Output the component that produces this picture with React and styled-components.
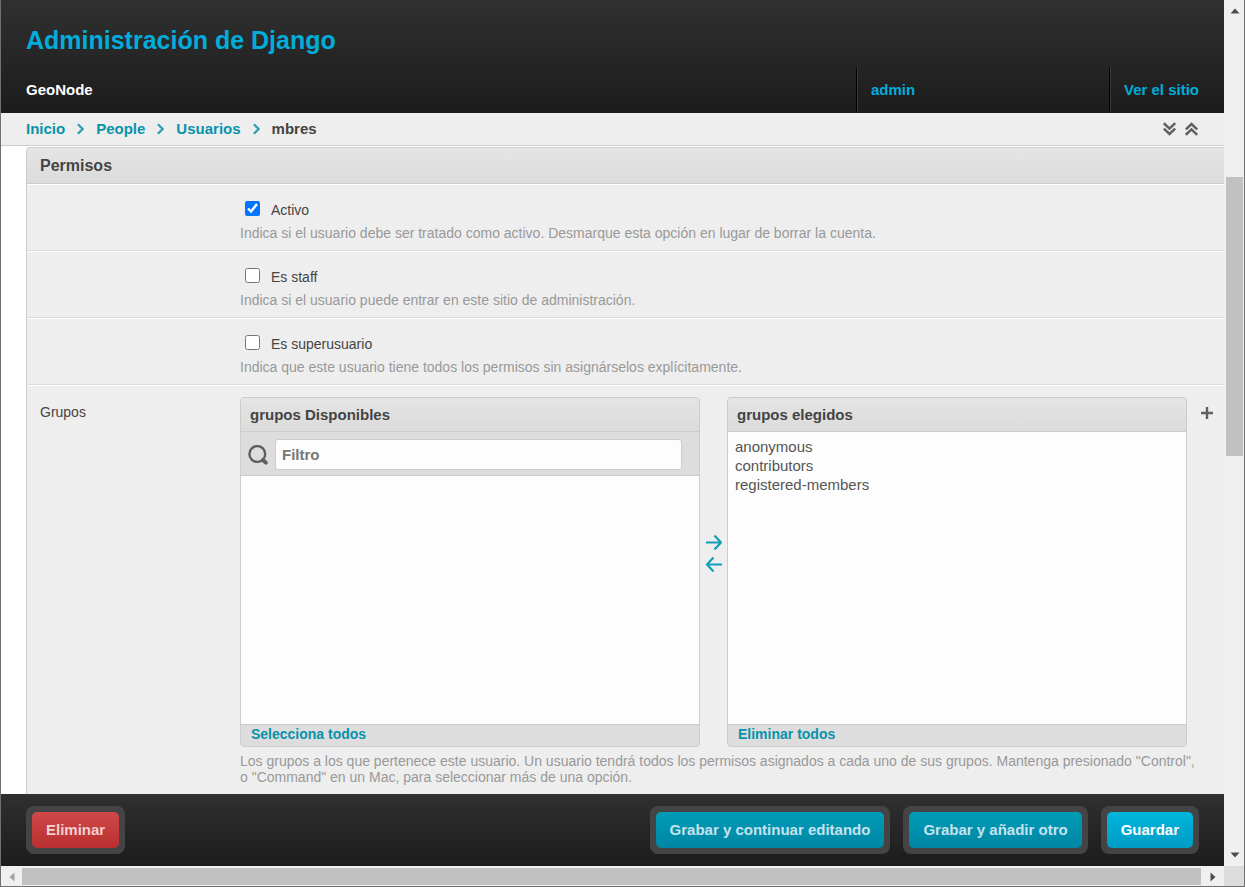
import React from "react";
import styled, { createGlobalStyle, css } from "styled-components";

const GlobalStyle = createGlobalStyle`
  *, *::before, *::after { box-sizing: border-box; }
  body { margin: 0; background: #fff; }
  body, button, input, select {
    font-family: Arial, "Liberation Sans", sans-serif;
    font-size: 14px;
    line-height: 16px;
    color: #444;
  }
`;

const colors = {
  link: "#0893ab",
  headerLink: "#00addb",
  line: "#ccc",
  panel: "#eee",
};

const darkBar = css`
  background: linear-gradient(#303030, #1c1c1c);
`;

const Frame = styled.div`
  display: grid;
  grid-template: minmax(0, 1fr) 20px / minmax(0, 1fr) 20px;
  height: 100vh;
  border: 1px solid #707070;
  border-top: 0;
  overflow: hidden;
`;

const Viewport = styled.div`
  display: flex;
  flex-direction: column;
  min-height: 0;
`;

const Header = styled.header`
  ${darkBar}
  flex: none;
  font-size: 15px;
  font-weight: bold;
`;

const SiteTitle = styled.h1`
  margin: 0;
  padding: 24px 25px 12px;
  font-size: 25px;
  line-height: 32px;
  color: ${colors.headerLink};
`;

const HeaderNav = styled.nav`
  display: flex;
  line-height: 43px;
`;

const Brand = styled.span`
  flex: 1;
  padding: 0 0 2px 25px;
  color: #fff;
`;

const HeaderCell = styled.span`
  min-width: ${(p) => (p.$wide ? "253px" : "0")};
  padding: 0 25px 2px 14px;
  border-left: 1px solid #000;
  box-shadow: inset 1px 0 #383838;
`;

const HeaderLink = styled.a`
  color: ${colors.headerLink};
  text-decoration: none;
`;

const BreadcrumbBar = styled.div`
  flex: none;
  display: flex;
  align-items: center;
  justify-content: space-between;
  height: 33px;
  padding: 0 25px;
  background: ${colors.panel};
  border-bottom: 1px solid ${colors.line};
  font-size: 15px;
  font-weight: bold;
`;

const Crumbs = styled.nav`
  display: flex;
  align-items: center;
  gap: 12px;
`;

const TextLink = styled.a`
  color: ${colors.link};
  font-weight: bold;
  text-decoration: none;
`;

const Tools = styled.div`
  display: flex;
  gap: 8px;
`;

const IconButton = styled.button`
  display: flex;
  padding: 0;
  border: 0;
  background: none;
  color: ${(p) => p.$color || "#606060"};
  cursor: pointer;
`;

const Content = styled.main`
  flex: 1;
  min-height: 0;
  overflow: hidden;
  padding: 1px 0 0 25px;
`;

const Module = styled.section`
  min-height: 100%;
  background: ${colors.panel};
  border: 1px solid ${colors.line};
  border-width: 1px 0 0 1px;
  border-radius: 4px 0 0 0;
`;

const ModuleTitle = styled.h2`
  margin: 0;
  padding: 1px 13px 0;
  font-size: 16px;
  line-height: 34px;
  background: linear-gradient(#e5e5e5, #dbdbdb);
  border-bottom: 1px solid ${colors.line};
  border-radius: 3px 0 0 0;
`;

const Row = styled.div`
  display: grid;
  grid-template-columns: 200px minmax(0, 1fr);
  padding: 0 0 0 13px;
  border-top: 1px solid #fff;
`;

const CheckRow = styled(Row)`
  min-height: 67px;
  padding-top: 15px;
  border-bottom: 1px solid #dadada;
`;

const GroupRow = styled(Row)`
  padding-top: 11px;
`;

const RowLabel = styled.label`
  padding-top: 7px;
`;

const CheckLabel = styled.label`
  display: flex;
  gap: 11px;
  padding-left: 5px;
  line-height: 20px;
`;

const Checkbox = styled.input`
  width: 15px;
  height: 15px;
  margin: 1px 0 0;
`;

const Help = styled.p`
  margin: 0;
  padding-top: 5px;
  color: #999;
`;

const GroupHelp = styled(Help)`
  padding-top: 6px;
  padding-right: 24px;
`;

const Selector = styled.div`
  display: grid;
  grid-template-columns: minmax(0, 1fr) 27px minmax(0, 1fr) 37px;
`;

const Picker = styled.div`
  display: flex;
  flex-direction: column;
  height: 350px;
  background: #ddd;
  border: 1px solid ${colors.line};
  border-radius: 4px;
  overflow: hidden;
`;

const PickerTitle = styled.h3`
  flex: none;
  margin: 0;
  padding: 0 9px;
  font-size: 15px;
  line-height: 33px;
  background: linear-gradient(#e5e5e5, #dbdbdb);
  border-bottom: 1px solid ${colors.line};
`;

const FilterBar = styled.div`
  display: flex;
  align-items: center;
  gap: 7px;
  height: 44px;
  padding: 2px 17px 0 7px;
  border-bottom: 1px solid ${colors.line};
`;

const FilterInput = styled.input`
  flex: 1;
  min-width: 0;
  height: 31px;
  padding: 0 6px;
  font-size: 15px;
  font-weight: bold;
  background: #fdfdfd;
  border: 1px solid ${colors.line};
  border-radius: 3px;
  &::placeholder { color: #777; }
`;

const List = styled.select`
  flex: 1;
  width: 100%;
  min-height: 0;
  padding: 5px;
  font-size: 15px;
  color: #555;
  background: #fdfdfd;
  border: 0;
  outline: 0;
  border-radius: 0;
  option { min-height: 0; padding: 1px 2px; line-height: 18px; }
`;

const PickerFooter = styled.div`
  flex: none;
  padding: 1px 10px 3px;
  line-height: 17px;
  border-top: 1px solid ${colors.line};
`;

const Arrows = styled.div`
  display: flex;
  flex-direction: column;
  align-items: center;
  gap: 6px;
  padding-top: 137px;
`;

const AddCell = styled.div`
  display: flex;
  align-items: flex-start;
  padding: 10px 0 0 14px;
`;

const SubmitBar = styled.footer`
  ${darkBar}
  flex: none;
  display: flex;
  gap: 13px;
  padding: 12px 25px;
`;

const SubmitBox = styled.div`
  padding: 6px;
  margin-right: ${(p) => (p.$push ? "auto" : "0")};
  background: #444;
  border-radius: 8px;
`;

const tones = {
  red: ["#d04848", "#b92f2f", "#f3d0d0"],
  teal: ["#009cb8", "#0086a3", "#c5e3ee"],
  bright: ["#00b5dc", "#009cc4", "#fff"],
};

const SubmitButton = styled.button`
  display: block;
  height: 36px;
  padding: 0 14px;
  border: 0;
  border-radius: 5px;
  font-size: 15px;
  font-weight: bold;
  color: ${(p) => tones[p.$tone][2]};
  background: linear-gradient(${(p) => tones[p.$tone][0]}, ${(p) => tones[p.$tone][1]});
  cursor: pointer;
`;

const Scrollbar = styled.div`
  display: flex;
  flex-direction: ${(p) => (p.$vertical ? "column" : "row")};
  background: #f0f0f0;
  padding: ${(p) => (p.$vertical ? "0 1px 0 2px" : "2px 0 1px")};
`;

const ScrollEnd = styled.span`
  flex: 0 0 21px;
  display: flex;
  align-items: center;
  justify-content: center;
  color: ${(p) => (p.$off ? "#a3a3a3" : "#4d4d4d")};
  &:last-child { flex-basis: 23px; }
`;

const Track = styled.div`
  flex: 1;
  display: grid;
  grid-template-rows: ${(p) => (p.$vertical ? "156fr 279fr 387fr" : "1fr")};
`;

const Thumb = styled.div`
  grid-row: ${(p) => (p.$vertical ? 2 : 1)};
  background: #c1c1c1;
`;

const Corner = styled.div`
  background: #dcdcdc;
`;

const Triangle = ({ turn = 0 }) => (
  <svg width="10" height="10" viewBox="0 0 10 10" aria-hidden="true">
    <path d="M0.5 7.5 5 2.5 9.5 7.5Z" fill="currentColor" transform={`rotate(${turn} 5 5)`} />
  </svg>
);

const Chevron = () => (
  <svg width="7" height="12" viewBox="0 0 7 12" fill="none" stroke="#2f9fae" strokeWidth="2.3" aria-hidden="true">
    <path d="M0.9 1.3 5.6 6 0.9 10.7" />
  </svg>
);

const DoubleChevron = ({ up }) => (
  <svg width="14" height="14" viewBox="0 0 14 14" fill="none" stroke="currentColor" strokeWidth="2.5" aria-hidden="true">
    <path
      d="M0.8 1.2 6.5 6.6 12.2 1.2M0.8 6.6 6.5 12 12.2 6.6"
      transform={up ? "rotate(180 6.5 7)" : undefined}
    />
  </svg>
);

const Arrow = ({ left }) => (
  <svg width="16" height="16" viewBox="0 0 16 16" fill="none" stroke="currentColor" strokeWidth="2.2" aria-hidden="true">
    <path d="M0 8.5H15M8.5 1.5 15 8.5 8.5 15.5" transform={left ? "rotate(180 8 8.5)" : undefined} />
  </svg>
);

const SearchIcon = () => (
  <svg width="20" height="20" viewBox="0 0 20 20" fill="none" stroke="#5e5e5e" aria-hidden="true">
    <circle cx="9.3" cy="9" r="7.9" strokeWidth="2.4" />
    <path d="M15 15 17.8 17.6" strokeWidth="4" strokeLinecap="round" />
  </svg>
);

const PlusIcon = () => (
  <svg width="12" height="12" viewBox="0 0 12 12" stroke="currentColor" strokeWidth="2.4" aria-hidden="true">
    <path d="M6 0V12M0 6H12" />
  </svg>
);

const permissions = [
  {
    id: "is_active",
    label: "Activo",
    checked: true,
    help: "Indica si el usuario debe ser tratado como activo. Desmarque esta opción en lugar de borrar la cuenta.",
  },
  {
    id: "is_staff",
    label: "Es staff",
    help: "Indica si el usuario puede entrar en este sitio de administración.",
  },
  {
    id: "is_superuser",
    label: "Es superusuario",
    help: "Indica que este usuario tiene todos los permisos sin asignárselos explícitamente.",
  },
];

const crumbs = ["Inicio", "People", "Usuarios"];
const chosenGroups = ["anonymous", "contributors", "registered-members"];

const actions = [
  { label: "Eliminar", tone: "red", push: true },
  { label: "Grabar y continuar editando", tone: "teal" },
  { label: "Grabar y añadir otro", tone: "teal" },
  { label: "Guardar", tone: "bright" },
];

export default function App() {
  return (
    <>
      <GlobalStyle />
      <Frame>
        <Viewport>
          <Header>
            <SiteTitle>Administración de Django</SiteTitle>
            <HeaderNav>
              <Brand>GeoNode</Brand>
              <HeaderCell $wide><HeaderLink href="#user">admin</HeaderLink></HeaderCell>
              <HeaderCell><HeaderLink href="#site">Ver el sitio</HeaderLink></HeaderCell>
            </HeaderNav>
          </Header>
          <BreadcrumbBar>
            <Crumbs>
              {crumbs.map((name) => (
                <React.Fragment key={name}>
                  <TextLink href={`#${name}`}>{name}</TextLink>
                  <Chevron />
                </React.Fragment>
              ))}
              <span>mbres</span>
            </Crumbs>
            <Tools>
              <IconButton type="button" aria-label="Abrir todo"><DoubleChevron /></IconButton>
              <IconButton type="button" aria-label="Cerrar todo"><DoubleChevron up /></IconButton>
            </Tools>
          </BreadcrumbBar>
          <Content>
            <Module>
              <ModuleTitle>Permisos</ModuleTitle>
              {permissions.map((p) => (
                <CheckRow key={p.id}>
                  <span />
                  <div>
                    <CheckLabel htmlFor={p.id}>
                      <Checkbox id={p.id} type="checkbox" defaultChecked={p.checked} />
                      {p.label}
                    </CheckLabel>
                    <Help>{p.help}</Help>
                  </div>
                </CheckRow>
              ))}
              <GroupRow>
                <RowLabel htmlFor="groups_to">Grupos</RowLabel>
                <div>
                  <Selector>
                    <Picker>
                      <PickerTitle>grupos Disponibles</PickerTitle>
                      <FilterBar>
                        <SearchIcon />
                        <FilterInput type="text" placeholder="Filtro" aria-label="Filtro" />
                      </FilterBar>
                      <List multiple aria-label="grupos Disponibles" />
                      <PickerFooter><TextLink href="#all">Selecciona todos</TextLink></PickerFooter>
                    </Picker>
                    <Arrows>
                      <IconButton type="button" $color="#12a0b8" aria-label="Elegir"><Arrow /></IconButton>
                      <IconButton type="button" $color="#12a0b8" aria-label="Eliminar"><Arrow left /></IconButton>
                    </Arrows>
                    <Picker>
                      <PickerTitle>grupos elegidos</PickerTitle>
                      <List multiple id="groups_to">
                        {chosenGroups.map((g) => <option key={g}>{g}</option>)}
                      </List>
                      <PickerFooter><TextLink href="#none">Eliminar todos</TextLink></PickerFooter>
                    </Picker>
                    <AddCell>
                      <IconButton type="button" aria-label="Añadir grupo"><PlusIcon /></IconButton>
                    </AddCell>
                  </Selector>
                  <GroupHelp>
                    Los grupos a los que pertenece este usuario. Un usuario tendrá todos los permisos asignados a cada uno
                    de sus grupos. Mantenga presionado "Control", o "Command" en un Mac, para seleccionar más de una
                    opción.
                  </GroupHelp>
                </div>
              </GroupRow>
            </Module>
          </Content>
          <SubmitBar>
            {actions.map((a) => (
              <SubmitBox key={a.label} $push={a.push}>
                <SubmitButton type="button" $tone={a.tone}>{a.label}</SubmitButton>
              </SubmitBox>
            ))}
          </SubmitBar>
        </Viewport>
        <Scrollbar $vertical>
          <ScrollEnd><Triangle /></ScrollEnd>
          <Track $vertical><Thumb $vertical /></Track>
          <ScrollEnd><Triangle turn={180} /></ScrollEnd>
        </Scrollbar>
        <Scrollbar>
          <ScrollEnd $off><Triangle turn={270} /></ScrollEnd>
          <Track><Thumb /></Track>
          <ScrollEnd><Triangle turn={90} /></ScrollEnd>
        </Scrollbar>
        <Corner />
      </Frame>
    </>
  );
}
